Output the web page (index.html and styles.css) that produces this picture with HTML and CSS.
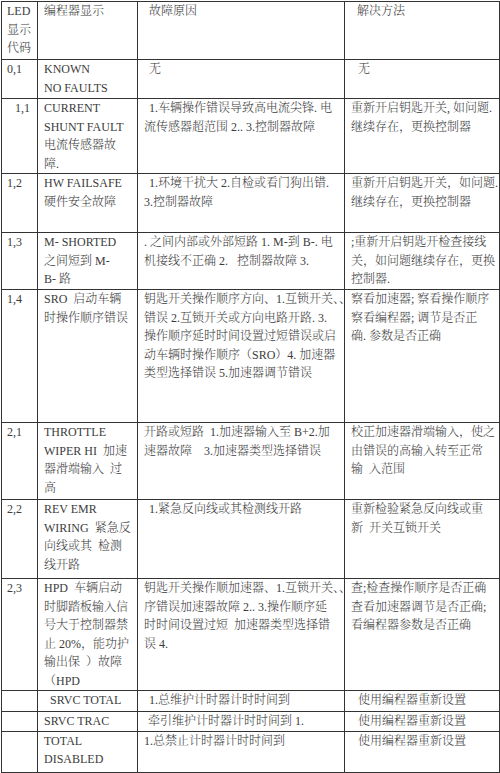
FILE: index.html
```html
<!DOCTYPE html>
<html lang="zh">
<head>
<meta charset="utf-8">
<title>LED 故障代码</title>
<link rel="stylesheet" href="styles.css">
</head>
<body>
<table class="fault-table">
  <colgroup>
    <col class="c-led">
    <col class="c-prog">
    <col class="c-cause">
    <col class="c-fix">
  </colgroup>
  <tr class="r-head">
    <td>LED<br>显示<br>代码</td>
    <td>编程器显示</td>
    <td class="i5">故障原因</td>
    <td class="i6">解决方法</td>
  </tr>
  <tr class="r-01">
    <td>0,1</td>
    <td>KNOWN<br>NO FAULTS</td>
    <td class="i5">无</td>
    <td class="i7">无</td>
  </tr>
  <tr class="r-11">
    <td class="i8">1,1</td>
    <td>CURRENT<br>SHUNT FAULT<br>电流传感器故<br>障.</td>
    <td><span class="lead">1.车辆操作错误导致高电流尖锋. 电</span><br>流传感器超范围 2.. 3.控制器故障</td>
    <td>重新开启钥匙开关, 如问题.<br>继续存在，更换控制器</td>
  </tr>
  <tr class="r-12">
    <td>1,2</td>
    <td>HW FAILSAFE<br>硬件安全故障</td>
    <td><span class="lead">1.环境干扰大 2.自检或看门狗出错.</span><br>3.控制器故障</td>
    <td>重新开启钥匙开关，如问题.<br>继续存在，更换控制器</td>
  </tr>
  <tr class="r-13">
    <td>1,3</td>
    <td>M- SHORTED<br>之间短到 M-<br>B- 路</td>
    <td>. 之间内部或外部短路 1. M-到 B-. 电<br>机接线不正确 2.&nbsp;&nbsp; 控制器故障 3.</td>
    <td>;重新开启钥匙开检查接线<br>关，如问题继续存在，更换<br>控制器.</td>
  </tr>
  <tr class="r-14">
    <td>1,4</td>
    <td>SRO&nbsp; 启动车辆<br>时操作顺序错误</td>
    <td>钥匙开关操作顺序方向、1.互锁开关、、<br>错误 2.互锁开关或方向电路开路. 3.<br>操作顺序延时时间设置过短错误或启<br>动车辆时操作顺序（SRO）4. 加速器<br>类型选择错误 5.加速器调节错误</td>
    <td>察看加速器; 察看操作顺序<br>察看编程器; 调节是否正<br>确. 参数是否正确</td>
  </tr>
  <tr class="r-21">
    <td>2,1</td>
    <td>THROTTLE<br>WIPER HI&nbsp; 加速<br>器滑端输入&nbsp; 过<br>高</td>
    <td>开路或短路&nbsp; 1.加速器输入至 B+2.加<br>速器故障&nbsp;&nbsp;&nbsp; 3.加速器类型选择错误</td>
    <td>校正加速器滑端输入，使之<br>由错误的高输入转至正常<br>输&nbsp; 入范围</td>
  </tr>
  <tr class="r-22">
    <td>2,2</td>
    <td>REV EMR<br>WIRING&nbsp; 紧急反<br>向线或其&nbsp; 检测<br>线开路</td>
    <td class="i5">1.紧急反向线或其检测线开路</td>
    <td>重新检验紧急反向线或重<br>新&nbsp; 开关互锁开关</td>
  </tr>
  <tr class="r-23">
    <td>2,3</td>
    <td>HPD&nbsp; 车辆启动<br>时脚踏板输入信<br>号大于控制器禁<br>止 20%，能功护<br>输出保&nbsp; ）故障<br>（HPD</td>
    <td>钥匙开关操作顺加速器、1.互锁开关、、<br>序错误加速器故障 2.. 3.操作顺序延<br>时时间设置过短&nbsp; 加速器类型选择错<br>误 4.</td>
    <td>查;检查操作顺序是否正确<br>查看加速器调节是否正确;<br>看编程器参数是否正确</td>
  </tr>
  <tr class="r-st">
    <td></td>
    <td class="i6">SRVC TOTAL</td>
    <td class="i5">1.总维护计时器计时时间到</td>
    <td class="i7">使用编程器重新设置</td>
  </tr>
  <tr class="r-sc">
    <td></td>
    <td>SRVC TRAC</td>
    <td class="i4">牵引维护计时器计时时间到 1.</td>
    <td class="i7">使用编程器重新设置</td>
  </tr>
  <tr class="r-td">
    <td></td>
    <td>TOTAL<br>DISABLED</td>
    <td>1.总禁止计时器计时时间到</td>
    <td class="i7">使用编程器重新设置</td>
  </tr>
</table>
</body>
</html>
```
FILE: styles.css
```css
html, body {
  margin: 0;
  padding: 0;
  background: #ffffff;
}

body {
  padding: 1px 0 0 1px;
}

.fault-table {
  border-collapse: collapse;
  table-layout: fixed;
  width: 498px;
  font-family: "Liberation Serif", "Noto Serif CJK SC", "Noto Sans CJK SC", serif;
  font-size: 12px;
  font-weight: 300;
  line-height: 18.5px;
  color: #3c3c3c;
}

.c-led { width: 36px; }
.c-prog { width: 100px; }
.c-cause { width: 207px; }
.c-fix { width: 155px; }

.fault-table td {
  border: 1px solid #333333;
  padding: 0 0 0 6px;
  vertical-align: top;
  white-space: nowrap;
  overflow: visible;
}

.fault-table td:first-child {
  padding-left: 5px;
}

.i4 { text-indent: 4px; }
.i5 { text-indent: 5px; }
.i6 { text-indent: 6px; }
.i7 { text-indent: 7px; }
.fault-table td.i8 { padding-left: 13px; }

.lead { padding-left: 5px; }

.r-head td { height: 57px; }
.r-01 td { height: 38px; }
.r-11 td { height: 74px; }
.r-12 td { height: 58px; }
.r-13 td { height: 56px; }
.r-14 td { height: 132px; }
.r-21 td { height: 76px; }
.r-22 td { height: 78px; }
.r-23 td { height: 111px; }
.r-st td { height: 20px; }
.r-sc td { height: 18px; }
.r-td td { height: 40px; }
```
